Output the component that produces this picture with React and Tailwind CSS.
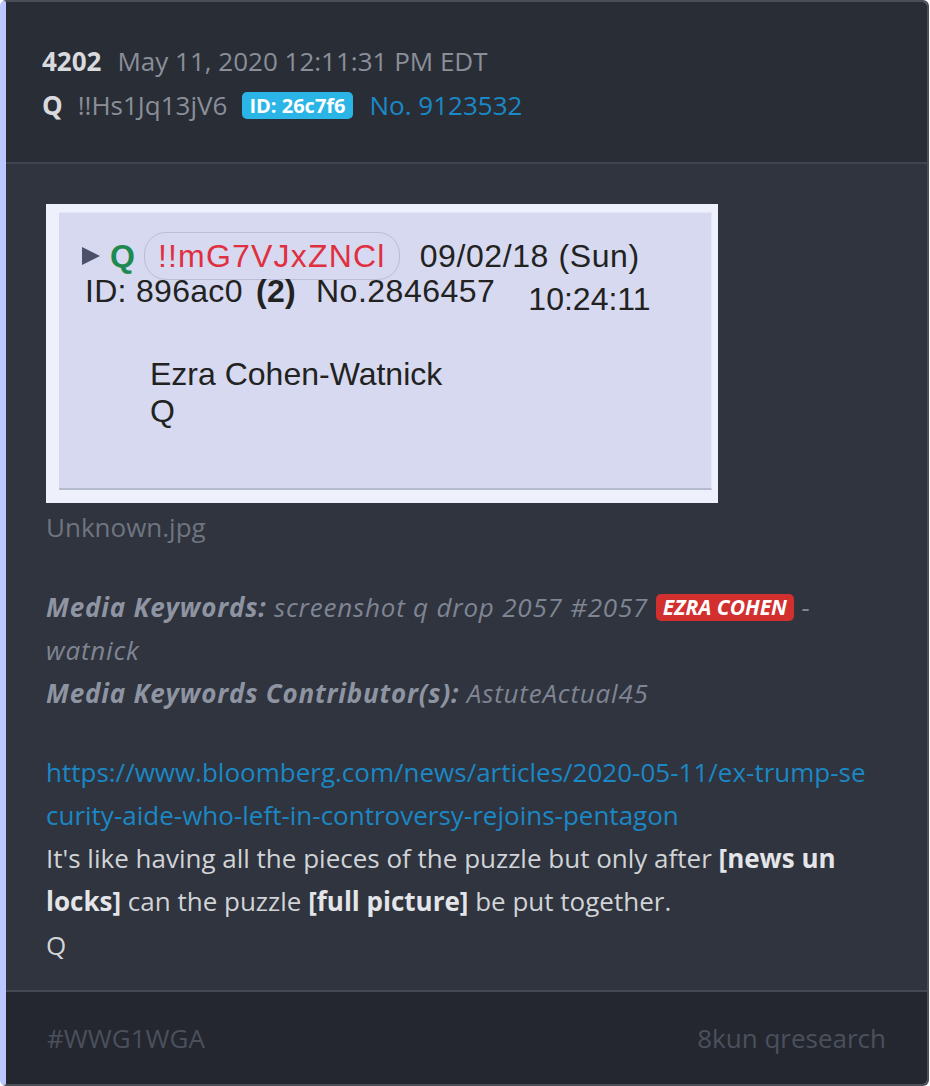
export default function App() {
  return (
    <div className="w-[930px] h-[1086px] bg-white" style={{ fontFamily: "'Open Sans', sans-serif" }}>
      <div className="w-[929px] h-[1086px] flex flex-col rounded-[6px] overflow-hidden border-2 border-[#4a4e57] border-l-[6px] border-l-[#bac8ff]">
        {/* header */}
        <div className="bg-[#292d36] pt-[37px] pb-[35px] pl-[36px] text-[26px] leading-[44px] border-b-2 border-[#40454f]">
          <div className="flex items-center">
            <span className="font-bold text-[#d9dadd]">4202</span>
            <span className="ml-[16px] text-[#8a8f99]">May 11, 2020 12:11:31 PM EDT</span>
          </div>
          <div className="flex items-center">
            <span className="font-bold text-[#d9dadd]">Q</span>
            <span className="ml-[15px] text-[#8a8f99]">!!Hs1Jq13jV6</span>
            <span className="ml-[15px] h-[27px] px-[7px] rounded-[5px] bg-[#2ab5e6] text-white font-bold text-[20px] leading-[27px]">ID: 26c7f6</span>
            <span className="ml-[17px] text-[#1a89c8]">No. 9123532</span>
          </div>
        </div>

        {/* body */}
        <div className="bg-[#2f343e] pl-[40px] pr-[20px] pt-[40px] pb-[22px] text-[26px] leading-[43px]">
          <QuotedImage />
          <div className="mt-[2px] text-[#6f7481] leading-[44px]">Unknown.jpg</div>

          <div className="mt-[37px] italic text-[#7f8593] tracking-[0.8px]">
            <div>
              <span className="font-bold text-[#8e94a2]">Media Keywords:</span> screenshot q drop 2057 #2057{" "}
              <span className="inline-block h-[27px] px-[7px] rounded-[5px] bg-[#d1302f] text-white font-bold text-[21px] leading-[27px] align-[2px] tracking-normal">EZRA COHEN</span> -
            </div>
            <div>watnick</div>
            <div>
              <span className="font-bold text-[#8e94a2]">Media Keywords Contributor(s):</span> AstuteActual45
            </div>
          </div>

          <div className="mt-[36px] text-[#d1d3d7]">
            <div className="text-[#1b87c4]">https://www.bloomberg.com/news/articles/2020-05-11/ex-trump-se</div>
            <div className="text-[#1b87c4]">curity-aide-who-left-in-controversy-rejoins-pentagon</div>
            <div>
              It's like having all the pieces of the puzzle but only after <span className="font-bold text-[#e4e5e8]">[news un</span>
            </div>
            <div>
              <span className="font-bold text-[#e4e5e8]">locks]</span> can the puzzle <span className="font-bold text-[#e4e5e8]">[full picture]</span> be put together.
            </div>
            <div className="leading-[45px]">Q</div>
          </div>
        </div>

        {/* footer */}
        <div className="flex-1 bg-[#24272f] border-t-2 border-[#434852] px-[41px] flex items-center justify-between text-[26px] text-[#4b505c]">
          <span>#WWG1WGA</span>
          <span>8kun qresearch</span>
        </div>
      </div>
    </div>
  );
}

function QuotedImage() {
  return (
    <div className="w-[672px] h-[299px] bg-[#eef1fc] pt-[8px] pl-[13px] pr-[6px] pb-[13px] flex">
      <div
        className="flex-1 bg-[#d6d9ef] border-t border-r border-[#e4e7f6] border-b-2 border-b-[#b6bace] pt-[19px] pl-[20px] text-[32px] leading-[38px] text-[#222]"
        style={{ fontFamily: "'Liberation Sans', Arial, sans-serif" }}
      >
        <div className="flex items-center">
          <svg width="22" height="22" viewBox="0 0 22 22" className="ml-[1px]">
            <polygon points="2,2 20,11 2,20" fill="#4c5068" />
          </svg>
          <span className="ml-[8px] font-bold text-[#1e8a4f]">Q</span>
          <span className="ml-[9px] h-[48px] px-[13px] rounded-[22px] border border-[#b9bdd8] text-[#e0303f] leading-[46px] tracking-[1.2px]">!!mG7VJxZNCl</span>
          <span className="ml-[20px] tracking-[0.6px]">09/02/18 (Sun)</span>
        </div>
        <div className="flex items-start -mt-[8px]">
          <span className="ml-[6px] tracking-[0.3px]">ID: 896ac0 <span className="ml-[4px] font-bold">(2)</span></span>
          <span className="ml-[20px] tracking-[0.5px]">No.2846457</span>
          <span className="ml-[33px] mt-[8px]">10:24:11</span>
        </div>
        <div className="mt-[38px] pl-[71px] leading-[37px]">
          <div>Ezra Cohen-Watnick</div>
          <div>Q</div>
        </div>
      </div>
    </div>
  );
}
